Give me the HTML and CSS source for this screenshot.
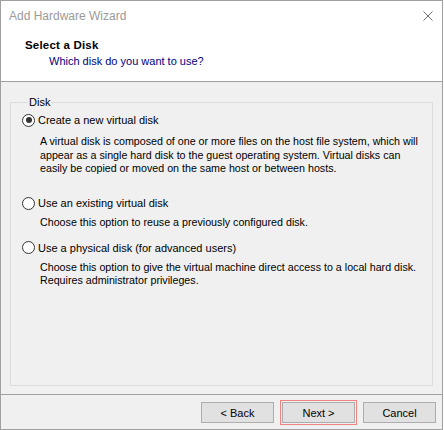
FILE: index.html
```html
<!DOCTYPE html>
<html>
<head>
<meta charset="utf-8">
<link rel="stylesheet" href="styles.css">
</head>
<body>
<div class="window">
  <div class="titlebar">
    <span class="title">Add Hardware Wizard</span>
    <svg class="close" width="10" height="10" viewBox="0 0 10 10"><path d="M0.5 0.5 L9.5 9.5 M9.5 0.5 L0.5 9.5" stroke="#6e6e6e" stroke-width="1" fill="none"/></svg>
  </div>
  <div class="header">
    <div class="h-title">Select a Disk</div>
    <div class="h-sub">Which disk do you want to use?</div>
  </div>
  <div class="body">
    <fieldset class="group">
      <legend>Disk</legend>
      <div class="option first">
        <div class="radio-row"><span class="radio checked"></span><span>Create a new virtual disk</span></div>
        <div class="desc tall">A virtual disk is composed of one or more files on the host file system, which will appear as a single hard disk to the guest operating system. Virtual disks can easily be copied or moved on the same host or between hosts.</div>
      </div>
      <div class="option">
        <div class="radio-row"><span class="radio"></span><span>Use an existing virtual disk</span></div>
        <div class="desc">Choose this option to reuse a previously configured disk.</div>
      </div>
      <div class="option">
        <div class="radio-row"><span class="radio"></span><span>Use a physical disk (for advanced users)</span></div>
        <div class="desc">Choose this option to give the virtual machine direct access to a local hard disk. Requires administrator privileges.</div>
      </div>
    </fieldset>
  </div>
  <div class="footer">
    <button class="btn">&lt; Back</button>
    <span class="focus"><button class="btn">Next &gt;</button></span>
    <button class="btn">Cancel</button>
  </div>
</div>
</body>
</html>
```

FILE: styles.css
```css
html, body {
  margin: 0;
  padding: 0;
  background: #ffffff;
}
body {
  font-family: "Liberation Sans", Arial, sans-serif;
  font-size: 11px;
  color: #000;
}
.window {
  width: 443px;
  height: 430px;
  box-sizing: border-box;
  border: 1px solid #a0a0a0;
  display: flex;
  flex-direction: column;
  background: #f0f0f0;
}
.titlebar {
  height: 29px;
  background: #fff;
  display: flex;
  align-items: center;
  justify-content: space-between;
  padding: 0 9px 0 8px;
}
.title {
  font-size: 12px;
  color: #9a9a9a;
  margin-top: 1px;
}
.close {
  margin-top: 1px;
}
.header {
  height: 52px;
  background: #fff;
  border-bottom: 1px solid #a0a0a0;
  box-sizing: border-box;
  padding: 8px 0 0 24px;
}
.h-title {
  font-weight: bold;
  font-size: 11.5px;
  line-height: 14px;
  letter-spacing: 0.2px;
}
.h-sub {
  color: #000080;
  line-height: 14px;
  margin-top: 2px;
  padding-left: 24px;
}
.body {
  flex: 1;
  padding: 14px 9px 8px 9px;
  display: flex;
  flex-direction: column;
  border-bottom: 1px solid #a0a0a0;
}
.group {
  flex: 1;
  margin: 0;
  border: 1px solid #dcdcdc;
  padding: 5px 0 0 11px;
}
.group legend {
  padding: 0 1px;
  margin-left: 6px;
  line-height: 12px;
}
.option {
  margin-bottom: 11px;
}
.radio-row {
  display: flex;
  align-items: center;
  height: 14px;
  gap: 3px;
}
.radio {
  width: 11px;
  height: 11px;
  border: 1px solid #333;
  border-radius: 50%;
  background: #fff;
  position: relative;
  box-sizing: content-box;
}
.radio.checked::after {
  content: "";
  position: absolute;
  left: 2.5px;
  top: 2.5px;
  width: 6px;
  height: 6px;
  border-radius: 50%;
  background: #333;
}
.desc {
  margin-top: 6px;
  padding-left: 18px;
  line-height: 13.5px;
  padding-right: 4px;
  font-size: 10.7px;
}
.desc.tall {
  margin-top: 8px;
  min-height: 50px;
}
.footer {
  height: 34px;
  display: flex;
  justify-content: flex-end;
  align-items: flex-start;
  padding: 7px 6px 0 0;
  gap: 6px;
  box-sizing: border-box;
}
.btn {
  width: 73px;
  height: 21px;
  border: 1px solid #adadad;
  background: #e1e1e1;
  font-family: "Liberation Sans", Arial, sans-serif;
  font-size: 11px;
  color: #000;
  padding: 0;
  margin: 0;
}
.focus {
  display: flex;
  border: 1px solid #f08282;
  padding: 1px;
  margin-top: -2px;
}
```
